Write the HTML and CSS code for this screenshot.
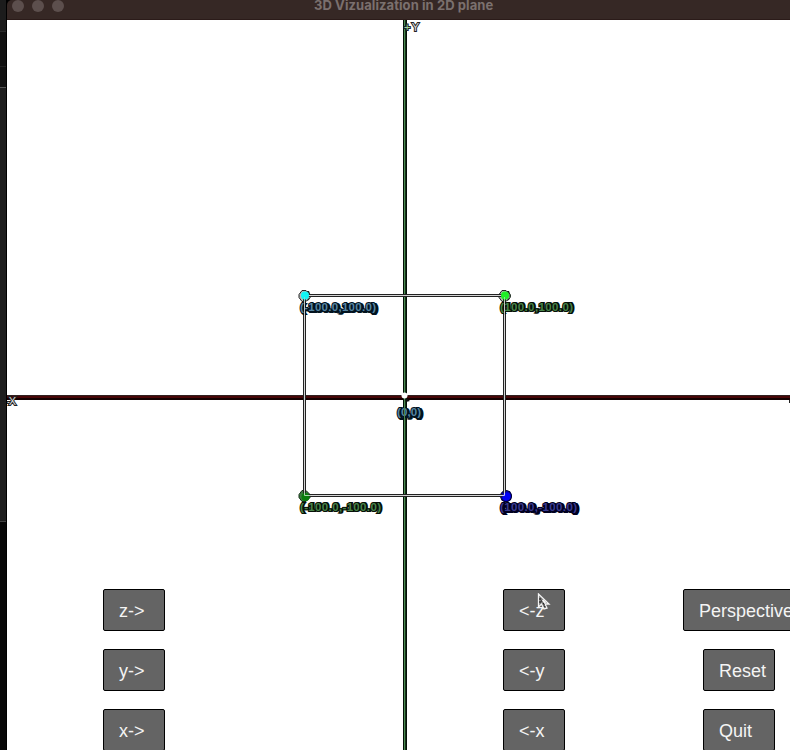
FILE: index.html
```html
<!DOCTYPE html>
<html lang="en">
<head>
<meta charset="utf-8">
<title>3D Vizualization in 2D plane</title>
<link rel="stylesheet" href="styles.css">
</head>
<body>
<div class="desktop">
  <div class="backdrop"></div>
  <main class="window">
    <header class="titlebar">
      <div class="lights"><i></i><i></i><i></i></div>
      <h1>3D Vizualization in 2D plane</h1>
    </header>
    <section class="canvas">
      <svg class="plot" viewBox="7 20 783 730" width="783" height="730">
        <g shape-rendering="crispEdges">
          <rect x="7" y="395" width="783" height="5" fill="#140000"/>
          <rect x="7" y="396" width="783" height="2" fill="#480607"/>
          <rect x="7" y="395" width="783" height="1" fill="#30201f"/>
          <rect x="403" y="20" width="4" height="730" fill="#031006"/>
          <rect x="404" y="20" width="1" height="730" fill="#4c8a52"/>
          <rect x="405" y="20" width="1" height="730" fill="#16331a"/>
          <rect x="789" y="400" width="1" height="3" fill="#222"/>
        </g>
        <g>
          <path d="M304 291h5l2 5-2 4-5 2-4-3z" fill="#063030"/>
          <path d="M504 291h5l2 5-2 4-5 2-4-3z" fill="#062a0c"/>
          <path d="M505 491h5l2 5-1 4-5 3-5-3z" fill="#000044"/>
          <path d="M302 290.500h4l4 4v3l-4 4h-4l-3-4v-3z" fill="#b5bab9" stroke="#222"/>
          <path d="M502 290.500h4l4 4v3l-4 4h-4l-3-4v-3z" fill="#aab5aa" stroke="#222"/>
          <path d="M302 490.500h4l4 4v3l-4 4h-4l-3-4v-3z" fill="#397c3c" stroke="#142b16"/>
          <circle cx="506" cy="496" r="5.500" fill="#0000bd" stroke="#000030"/>
        </g>
        <g fill="none" shape-rendering="crispEdges">
          <rect x="304.500" y="295.500" width="200" height="200" stroke="#222" stroke-width="3"/>
          <rect x="304.500" y="295.500" width="200" height="200" stroke="#d4d4d4" stroke-width="1"/>
        </g>
        <circle cx="305" cy="295.500" r="4" fill="#10f5f5"/>
        <circle cx="505" cy="295.500" r="4" fill="#20ef28"/>
        <circle cx="305.500" cy="497" r="4" fill="#087d0c"/>
        <circle cx="506.500" cy="496.500" r="4" fill="#0000f5"/>
        <path d="M304.500 491v4.500h6" fill="none" stroke="#a8d1aa"/>
        <path d="M504.500 490v5.500h-6" fill="none" stroke="#c9c9ef"/>
        <path d="M304.500 297v4" stroke="#75dcdc"/>
        <path d="M504.500 297v4" stroke="#8ce490"/>
        <path d="M405 397l5 4-4 1z" fill="#111"/>
        <circle cx="404.500" cy="395.500" r="3" fill="#fff"/>
        <g class="labels">
          <text class="cyan" x="300" y="311" textLength="76">(-100.0,100.0)</text>
          <text class="green" x="500" y="311" textLength="73">(100.0,100.0)</text>
          <text class="green" x="300" y="511" textLength="81">(-100.0,-100.0)</text>
          <text class="blue" x="500" y="511" textLength="77">(100.0,-100.0)</text>
          <text class="cyan" x="397" y="416" textLength="24">(0,0)</text>
          <text class="axis" x="404" y="31" textLength="15"><tspan fill="#9bd49e">+</tspan>Y</text>
          <text class="axis" x="7" y="405" textLength="9">-X</text>
        </g>
        <path d="M304.500 301v14M504.500 301v14" stroke="#c5c5c5"/>
        <path d="M404.500 401v22" stroke="#4c8a52"/>
      </svg>
      <div class="controls">
        <button>z-&gt;</button><button>&lt;-z</button><button class="perspective">Perspective</button>
        <button>y-&gt;</button><button>&lt;-y</button><button class="action">Reset</button>
        <button>x-&gt;</button><button>&lt;-x</button><button class="action">Quit</button>
      </div>
      <svg class="cursor" width="14" height="19" viewBox="0 0 14 19">
        <path d="M1.500 1v13l3-3 2.500 5 3-1-2-4h4z" fill="#777" stroke="#f4f4f4" stroke-width="1.300"/>
        <path d="M3 5v6M5 7v2M6.500 10l1.500 4" fill="none" stroke="#111" stroke-dasharray="2 1"/>
        <path d="M5.500 7l3 3" stroke="#f4f4f4" stroke-width="2"/>
      </svg>
    </section>
  </main>
</div>
</body>
</html>
```
FILE: styles.css
```css
* {
  box-sizing: border-box;
}

body {
  margin: 0;
  overflow: hidden;
  background: #000;
}

.desktop {
  display: grid;
  grid-template-columns: 6px 784px;
  width: 790px;
  height: 750px;
  overflow: hidden;
  background: #000;
}

.backdrop {
  background: linear-gradient(#1c1c1c 0 31px, #2b2b2b 31px 32px, #111 32px 66px, #222 66px 67px, #111 67px 87px, #555 87px 88px, #1e1e1e 88px 521px, #444 521px 522px, #080808 522px);
}

.window {
  padding-left: 1px;
  overflow: hidden;
  background: #000;
}

.titlebar {
  display: grid;
  grid-template-columns: 62px 1fr;
  height: 20px;
  overflow: hidden;
  border-bottom: 1px solid #2b1b19;
  border-top-left-radius: 5px;
  background: #362825;
}

.lights {
  display: flex;
  gap: 8px;
  padding-left: 5px;
}

.lights i {
  flex: none;
  width: 12px;
  height: 12px;
  border-radius: 50%;
  background: #5c4f4d;
}

.titlebar h1 {
  width: 182px;
  margin: -3px 0 0 245px;
  color: #7b706e;
  font: 700 13px/17px Inter, sans-serif;
  letter-spacing: 0.08px;
  white-space: nowrap;
}

.canvas {
  position: relative;
  display: grid;
  height: 730px;
  overflow: hidden;
  background: #fff;
}

.plot,
.controls {
  grid-area: 1 / 1;
}

.labels text {
  font: bold 11.5px "Liberation Sans", sans-serif;
  stroke: #000;
  stroke-width: 2px;
  paint-order: stroke;
}

.labels .cyan {
  fill: #5585a3;
  stroke: #02131f;
  text-shadow: 1px 1px #02131f, 2px 1px #02131f;
}

.labels .green {
  fill: #478349;
  stroke: #061007;
  text-shadow: 1px 0 #061007;
}

.labels .blue {
  fill: #3a3a91;
  stroke: #000020;
  text-shadow: 1px 1px #000020, 2px 1px #000020;
}

.labels .axis {
  fill: #ddd;
  stroke: #222;
  font-size: 11px;
  font-weight: normal;
}

.controls {
  display: grid;
  grid-template-columns: 400px 180px 120px;
  grid-template-rows: repeat(3, 42px);
  row-gap: 18px;
  padding: 569px 0 0 96px;
  height: 730px;
  overflow: hidden;
}

.controls button {
  width: 62px;
  height: 42px;
  padding: 2px 0 0 15px;
  border: 1px solid #000;
  border-radius: 2px;
  background: #646464;
  color: #f4f4f4;
  font: 18px/38px "Liberation Sans", sans-serif;
  text-align: left;
  white-space: nowrap;
}

.controls .perspective {
  width: 122px;
}

.controls .action {
  width: 72px;
  margin-left: 20px;
}

.cursor {
  position: absolute;
  left: 530px;
  top: 573px;
}
```
